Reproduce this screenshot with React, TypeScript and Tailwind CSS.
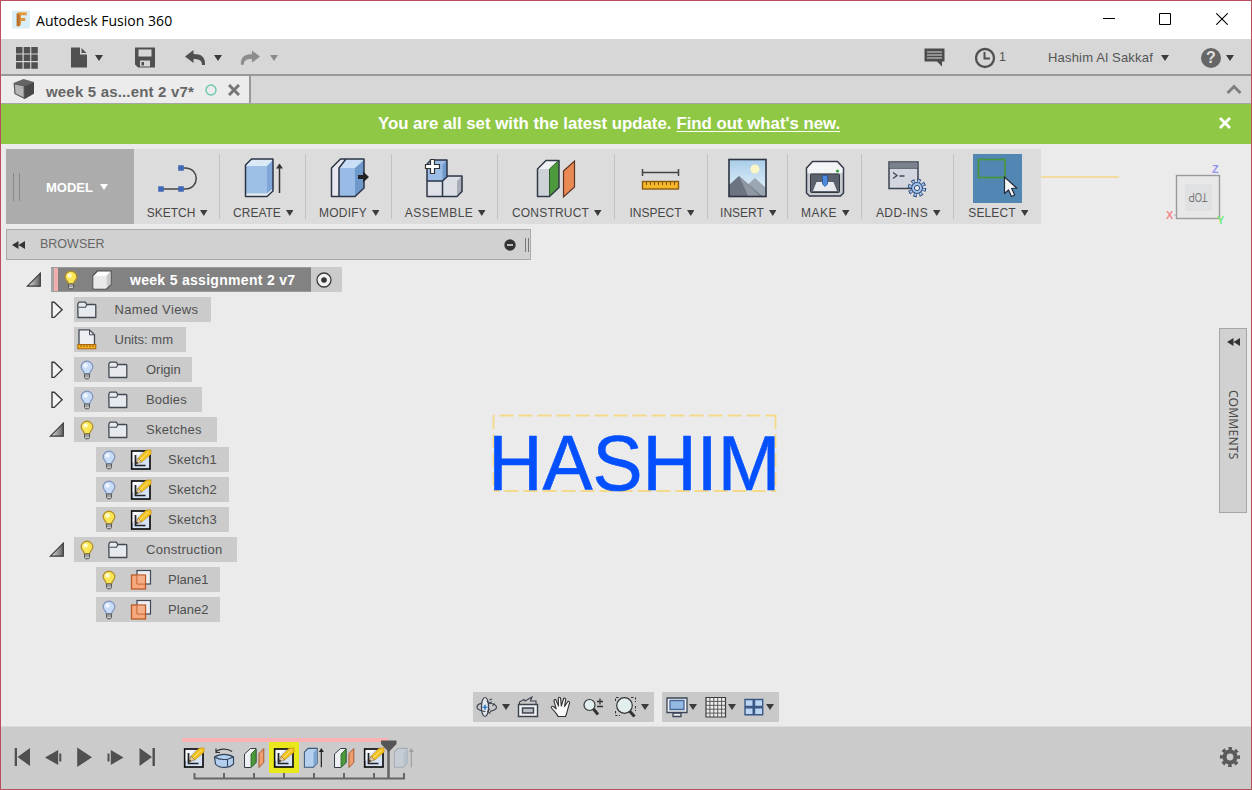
import React from "react";

type IconProps = { className?: string; size?: number };

const Caret = ({ className = "text-[#3c3c3c]", size = 8 }: IconProps) => (
  <svg width={size} height="6" viewBox="0 0 8 6" preserveAspectRatio="none" className={`shrink-0 ${className}`}>
    <path d="M0 0h8L4 6z" fill="currentColor" />
  </svg>
);

/* ---------- Ribbon icons ---------- */

const SketchIcon = () => (
  <svg width="48" height="48" viewBox="0 0 48 48" fill="none">
    <path d="M8 35H32C47 35 47 14 32 14H28" stroke="#444" strokeWidth="1.5" />
    <path d="M25.2 11.2h5.600v5.600h-5.600zM25.2 32.2h5.600v5.600h-5.600zM5.2 32.2h5.600v5.600h-5.600z" fill="#3f68b8" />
  </svg>
);

const CreateIcon = () => (
  <svg width="48" height="48" viewBox="0 0 48 48" fill="none">
    <path d="M6 11l6-6h22v32l-6 6H6z" fill="#dce9f7" />
    <path d="M6.500 12h21.500v28H6.500z" fill="#9fc0e6" />
    <path d="M28 12l6-6v31l-6 4z" fill="#7fa6d6" />
    <path d="M6.500 39.500H28l5.500-4.500v2.500L28 42.500H6.500z" fill="#eceef2" />
    <path d="M6.500 11l6-6h21.500v32l-6 5.500H6.500z" stroke="#2b3547" strokeWidth="1.500" strokeLinejoin="round" />
    <path d="M40.500 12v27" stroke="#333" strokeWidth="1.500" />
    <path d="M37 14.500l3.500-5 3.500 5z" fill="#333" />
  </svg>
);

const ModifyIcon = () => (
  <svg width="48" height="48" viewBox="0 0 48 48" fill="none">
    <path d="M6.500 14l9-9h5l-6.500 9v28H6.500z" fill="#e6e8ed" />
    <path d="M14 13l6-8h19v29l-9 8H14z" fill="#c9dff5" />
    <path d="M14 14h16v28H14z" fill="#98bce6" />
    <path d="M30 14l9-8v28l-9 8z" fill="#7099cb" />
    <path d="M6.500 14l9-9H39v29l-9 8.500H6.500zM14 42V14l7-9" stroke="#2b3547" strokeWidth="1.500" strokeLinejoin="round" />
    <path d="M33 21h5v-3.500l6 5.500-6 5.500V25h-5z" fill="#222" />
  </svg>
);

const AssembleIcon = () => (
  <svg width="48" height="48" viewBox="0 0 48 48" fill="none">
    <path d="M6 10l4-4h16v17l-4.500 4H6z" fill="#9cbde5" />
    <path d="M21.500 11L26 6v17l-4.500 4z" fill="#7199cc" />
    <path d="M6 27h15.500v15.500H6z" fill="#e0e1e6" />
    <path d="M21.500 27l5-5H41v15.500l-5 5H21.500z" fill="#dcdee5" />
    <path d="M36 27l5-5v15.500l-5 5z" fill="#a8adb8" />
    <path d="M6 10l4-4h16v17M6 10v32.500h30l5-5V22H27l-5.500 5v15.500M6 27h15.500" stroke="#2b3547" strokeWidth="1.500" strokeLinejoin="round" />
    <path d="M9.500 5.500h4v5h5v4h-5v5h-4v-5h-5v-4h5z" fill="#fff" stroke="#333" strokeWidth="1.200" />
  </svg>
);

const ConstructIcon = () => (
  <svg width="48" height="48" viewBox="0 0 48 48" fill="none">
    <path d="M5.500 15L14 6.500h13L17.500 15v27.500h-12z" fill="#f1f2f4" />
    <path d="M6 15h11.500v27H6z" fill="#cdd1d8" />
    <path d="M17.500 15L27 6.500v27l-9.500 9z" fill="#4c9a3d" />
    <path d="M5.500 15L14 6.500h13v27l-9.500 9h-12z" stroke="#333b48" strokeWidth="1.500" strokeLinejoin="round" />
    <path d="M17.500 42V15L26 7" stroke="#2b5d24" />
    <path d="M31.500 17L42.500 7v26l-11 10z" fill="#e98a55" stroke="#5a3522" strokeWidth="1.200" />
  </svg>
);

const InspectIcon = () => (
  <svg width="48" height="48" viewBox="0 0 48 48" fill="none">
    <path d="M5.500 18.500h36M5.500 15v7M41.500 15v7" stroke="#444" strokeWidth="1.500" />
    <rect x="5.500" y="27.500" width="36" height="7.500" fill="#f5b726" stroke="#8a5a10" strokeWidth="1.400" />
    <path d="M9.500 28v3M13.500 28v3M17.500 28v3M21.500 28v3M25.500 28v3M29.500 28v3M33.500 28v3M37.500 28v3" stroke="#7b5210" />
  </svg>
);

const InsertIcon = () => (
  <svg width="48" height="48" viewBox="0 0 48 48" fill="none">
    <defs>
      <linearGradient id="sky" x1="0" y1="0" x2="0" y2="1">
        <stop offset="0" stopColor="#a9cdea" />
        <stop offset="1" stopColor="#eaf5fb" />
      </linearGradient>
    </defs>
    <rect x="5" y="5.500" width="37" height="37" fill="url(#sky)" />
    <circle cx="31" cy="15" r="4.500" fill="#fbf6c5" />
    <path d="M20 34l11-10 11 10v8H22z" fill="#9aa7b2" />
    <path d="M5 31L15 22l8 7 15 13H5z" fill="#6c7482" />
    <path d="M15 22l8 7 13 13H24l-3-7z" fill="#8f97a3" />
    <rect x="5" y="5.500" width="37" height="37" stroke="#2c3440" strokeWidth="1.600" />
  </svg>
);

const MakeIcon = () => (
  <svg width="48" height="48" viewBox="0 0 48 48" fill="none">
    <path d="M5.500 14l6-6.500h25l6 6.500v25l-3 3H8.500l-3-3z" fill="#c7cad0" stroke="#333b48" strokeWidth="1.500" strokeLinejoin="round" />
    <path d="M6.500 14.500l5.500-6h24l5.500 6v4.500h-35z" fill="#f3f4f6" />
    <circle cx="36.500" cy="17" r="1.500" fill="#2f9c36" />
    <rect x="9.500" y="20" width="29" height="18.500" rx="1" fill="#5c626d" stroke="#343941" />
    <path d="M15.500 28h17l3.500 9H12z" fill="#e8eaee" />
    <path d="M21.500 21.500h5v8.500l-2.500 2.500-2.500-2.500z" fill="#4b8ade" stroke="#23559f" strokeWidth=".8" />
  </svg>
);

const AddInsIcon = () => (
  <svg width="48" height="48" viewBox="0 0 48 48" fill="none">
    <rect x="5" y="8" width="29" height="26.500" fill="#d3d6df" stroke="#3b4350" strokeWidth="1.500" />
    <rect x="5.700" y="8.700" width="27.600" height="5" fill="#7b818d" />
    <path d="M5 14.200h29" stroke="#3b4350" />
    <path d="M9 18.500l4 3-4 3M15.500 22h5" stroke="#444b57" strokeWidth="1.400" />
    <circle cx="33" cy="34" r="7" stroke="#2b4c7e" strokeWidth="4.500" strokeDasharray="3.200 2.300" />
    <circle cx="33" cy="34" r="5.500" fill="#a9c6ea" stroke="#2b4c7e" strokeWidth="1.200" />
    <circle cx="33" cy="34" r="7" stroke="#a9c6ea" strokeWidth="2.400" strokeDasharray="2 3.500" strokeDashoffset="-.6" />
    <circle cx="33" cy="34" r="2.600" fill="#e8eaee" stroke="#2b4c7e" />
  </svg>
);

const SelectIcon = () => (
  <svg width="49" height="49" viewBox="0 0 49 49" fill="none">
    <rect width="49" height="49" fill="#5387b3" />
    <rect x="5.500" y="5.500" width="26.500" height="18" stroke="#46963f" strokeWidth="1.800" />
    <path d="M31.500 23v16.500l4-3.500 3 6.500 3.200-1.500-3-6.500 5-.5z" fill="#f4f5f7" stroke="#222b3a" strokeWidth="1.200" />
  </svg>
);

/* ---------- Browser tree icons ---------- */

const Bulb = ({ on }: { on?: boolean }) => (
  <svg width="14" height="20" viewBox="0 0 14 20" fill="none" className="shrink-0">
    <path
      d="M7 1.200a5.800 5.800 0 0 0-5.800 5.800c0 2.900 3 3.900 3.200 6.900h5.200c.2-3 3.200-4 3.200-6.900A5.800 5.800 0 0 0 7 1.200z"
      fill={on ? "#fbe655" : "#c8dcf8"}
      stroke={on ? "#b08d28" : "#7f93bd"}
      strokeWidth="1.200"
    />
    <circle cx="5.500" cy="5.500" r="2.300" fill={on ? "#fffbd0" : "#eff6ff"} />
    <path d="M4.500 14h5v3.500l-1 1.300h-3l-1-1.300z" fill="#c9c9c9" stroke="#555" />
    <path d="M4.500 16h5" stroke="#666" strokeWidth=".8" />
  </svg>
);

const Folder = () => (
  <svg width="20" height="18" viewBox="0 0 20 18" fill="none" className="shrink-0">
    <path d="M.8 3L2 1.200h6.500L9.600 3.500H18a.8.8 0 0 1 .8.8V16.500H1z" fill="#e6e9ee" stroke="#434853" strokeWidth="1.300" strokeLinejoin="round" />
    <path d="M1.500 6.200H8.500l1.200-2.200" stroke="#434853" strokeWidth="1.100" />
  </svg>
);

const UnitsIcon = () => (
  <svg width="20" height="21" viewBox="0 0 20 21" fill="none" className="shrink-0">
    <path d="M2 .8h10.500l5 5v10H2z" fill="#edeff2" stroke="#444a55" strokeWidth="1.300" />
    <path d="M12.500 1v4.800h4.800" stroke="#444a55" />
    <rect x=".8" y="15.500" width="18" height="4.300" fill="#f5ae1e" stroke="#a8690c" />
    <path d="M4 16v2M7 16v2M10 16v2M13 16v2M16 16v2" stroke="#8a5a10" />
  </svg>
);

const SketchDoc = () => (
  <svg width="22" height="22" viewBox="0 0 22 22" fill="none" className="shrink-0">
    <rect x="1.700" y="2" width="18.300" height="18" fill="#d5e2f5" stroke="#111" strokeWidth="1.700" />
    <path d="M2.600 3h9l-9 11z" fill="#f7f9fd" />
    <path d="M5.500 6v10.500h10" stroke="#222" strokeWidth="1.700" />
    <path d="M16 1.200L21 .8l.2 4.200-9.400 8L8 9.200z" fill="#f3c21f" stroke="#b9860f" strokeWidth=".5" />
    <path d="M18.500 3L10 11" stroke="#fbe68a" />
    <path d="M8 9.200l-2.200 5.600 6-1.800z" fill="#eecb98" stroke="#6b5128" strokeWidth=".5" />
    <path d="M6.800 12.500l-1.200 2.500 2.600-.8z" fill="#222" />
  </svg>
);

const PlaneIcon = () => (
  <svg width="22" height="22" viewBox="0 0 22 22" fill="none" className="shrink-0">
    <rect x="7" y="1.500" width="13.500" height="13.500" fill="#eceef2" stroke="#434853" strokeWidth="1.200" />
    <rect x="1.500" y="6" width="14" height="14" fill="#f7a87c" stroke="#bb5a26" strokeWidth="1.300" />
    <path d="M7 6.500v8.500h8.500" stroke="#bb5a26" />
    <path d="M7.500 6.500h7.500V14.500H7.500z" fill="#f3b491" opacity=".6" />
  </svg>
);

const CubeIcon = () => (
  <svg width="22" height="22" viewBox="0 0 22 22" fill="none" className="shrink-0">
    <path d="M2 6.500L6.500 2H20v13.500L15.500 20H2z" fill="#fff" stroke="#4b4b4b" strokeWidth="1.100" strokeLinejoin="round" />
    <path d="M2.600 7h12.600v12.400H2.600z" fill="#e9e9e9" />
    <path d="M15.500 6.500L19.500 2.500v12.800l-4 4z" fill="#c9c9c9" />
  </svg>
);

const OpenArrow = () => (
  <svg width="16" height="16" viewBox="0 0 16 16" className="shrink-0">
    <defs>
      <linearGradient id="arr" x1="0" y1="0" x2="1" y2="0">
        <stop offset="0" stopColor="#e5e5e5" />
        <stop offset="1" stopColor="#606060" />
      </linearGradient>
    </defs>
    <path d="M14.300 1.200v13H1.300z" fill="url(#arr)" stroke="#3a3a3a" strokeWidth="1.200" />
  </svg>
);

const ClosedArrow = () => (
  <svg width="16" height="18" viewBox="0 0 16 18" className="shrink-0">
    <path d="M3 1.200h2.300l7.800 7.600-7.800 7.600H3z" fill="#f3f3f3" stroke="#3a3a3a" strokeWidth="1.400" />
  </svg>
);

/* ---------- Data ---------- */

const groups = [
  { label: "SKETCH", w: "w-[86px]", t: "", icon: <SketchIcon /> },
  { label: "CREATE", w: "w-[86px]", t: "", icon: <CreateIcon /> },
  { label: "MODIFY", w: "w-[86px]", t: "tracking-[0.2px]", icon: <ModifyIcon /> },
  { label: "ASSEMBLE", w: "w-[106px]", t: "tracking-[0.5px]", icon: <AssembleIcon /> },
  { label: "CONSTRUCT", w: "w-[117px]", t: "tracking-[0.2px]", icon: <ConstructIcon /> },
  { label: "INSPECT", w: "w-[93px]", t: "", icon: <InspectIcon /> },
  { label: "INSERT", w: "w-[80px]", t: "", icon: <InsertIcon /> },
  { label: "MAKE", w: "w-[74px]", t: "tracking-[0.5px]", icon: <MakeIcon /> },
  { label: "ADD-INS", w: "w-[92px]", t: "tracking-[0.4px]", icon: <AddInsIcon /> },
  { label: "SELECT", w: "w-[87px]", t: "tracking-[0.1px]", icon: <SelectIcon /> },
];

type Row = {
  label: string;
  indent: string;
  width: string;
  t?: string;
  arrow?: "open" | "closed";
  bulb?: "on" | "off";
  icon: React.ReactNode;
};

const rows: Row[] = [
  { label: "Named Views", indent: "pl-[42px]", width: "w-[137px]", t: "tracking-[0.35px]", arrow: "closed", icon: <Folder /> },
  { label: "Units: mm", indent: "pl-[42px]", width: "w-[112px]", icon: <UnitsIcon /> },
  { label: "Origin", indent: "pl-[42px]", width: "w-[118px]", arrow: "closed", bulb: "off", icon: <Folder /> },
  { label: "Bodies", indent: "pl-[42px]", width: "w-[128px]", t: "tracking-[0.2px]", arrow: "closed", bulb: "off", icon: <Folder /> },
  { label: "Sketches", indent: "pl-[42px]", width: "w-[143px]", t: "tracking-[0.3px]", arrow: "open", bulb: "on", icon: <Folder /> },
  { label: "Sketch1", indent: "pl-[64px]", width: "w-[133px]", t: "tracking-[0.3px]", bulb: "off", icon: <SketchDoc /> },
  { label: "Sketch2", indent: "pl-[64px]", width: "w-[133px]", t: "tracking-[0.3px]", bulb: "off", icon: <SketchDoc /> },
  { label: "Sketch3", indent: "pl-[64px]", width: "w-[133px]", t: "tracking-[0.3px]", bulb: "on", icon: <SketchDoc /> },
  { label: "Construction", indent: "pl-[42px]", width: "w-[163px]", t: "tracking-[0.3px]", arrow: "open", bulb: "on", icon: <Folder /> },
  { label: "Plane1", indent: "pl-[64px]", width: "w-[124px]", bulb: "on", icon: <PlaneIcon /> },
  { label: "Plane2", indent: "pl-[64px]", width: "w-[124px]", bulb: "off", icon: <PlaneIcon /> },
];

/* ---------- Sections ---------- */

const TitleBar = () => (
  <header className="flex h-[38px] shrink-0 items-center bg-white pl-[11px] pr-[23px]">
    <svg width="18" height="19" viewBox="0 0 19 19" className="-mt-[1px] shrink-0">
      <rect width="19" height="19" fill="#d9eef7" />
      <path d="M5 3l3-1.500h7.500v3.500H9.500v3h4.500v3H9.500v4.500L5 16.500z" fill="#e0923c" />
      <path d="M5 3l3 1.500v12L5 16.500z" fill="#b5702f" />
      <path d="M8 1.500h7.500v1.500H8z" fill="#f3b565" />
    </svg>
    <span className="ml-[6px] whitespace-nowrap font-['Open_Sans',sans-serif] text-[14px] tracking-[0.03px] text-black">Autodesk Fusion 360</span>
    <div className="-mt-[2px] ml-auto flex items-center">
      <svg width="12" height="12" viewBox="0 0 12 12"><path d="M0 5.500h12" stroke="#000" /></svg>
      <svg width="12" height="12" viewBox="0 0 12 12" className="ml-[44px] mr-[45px]"><path d="M.5.5h11v11H.5z" fill="none" stroke="#000" /></svg>
      <svg width="12" height="12" viewBox="0 0 12 12"><path d="M.3.3l11.400 11.400M11.700.3L.3 11.700" stroke="#000" strokeWidth="1.100" /></svg>
    </div>
  </header>
);

const AppBar = () => (
  <div className="flex h-[37px] shrink-0 items-center border-b-2 border-[#999] bg-[#d7d7d7] pl-[15px] pr-[17px] pt-[2px] text-[#555]">
    <svg width="22" height="22" viewBox="0 0 22 22" fill="#505050">
      <path d="M0 0h6.500v6.500H0zM7.700 0h6.500v6.500H7.700zM15.300 0h6.500v6.500h-6.500zM0 7.600h6.500v6.500H0zM7.700 7.600h6.500v6.500H7.700zM15.300 7.600h6.500v6.500h-6.500zM0 15.200h6.500v6.500H0zM7.700 15.200h6.500v6.500H7.700zM15.300 15.200h6.500v6.500h-6.500z" />
    </svg>
    <svg width="18" height="21" viewBox="0 0 18 21" className="ml-[32px]" fill="#505050">
      <path d="M1 .5h9v7h7V20.500H1zM11.500 1l5 5h-5z" />
    </svg>
    <div className="ml-[7px]"><Caret /></div>
    <svg width="20" height="21" viewBox="0 0 20 21" className="ml-[32px]" fill="#505050">
      <path fillRule="evenodd" d="M0 .5h20v20H3l-3-3zM3.500 2.500v7h13v-7z" />
      <path d="M5 13.500h10v6H5z" fill="#d7d7d7" />
      <path d="M6.500 15h2.500v3.500H6.500z" />
    </svg>
    <svg width="21" height="16" viewBox="0 0 21 16" className="ml-[30px]" fill="#505050">
      <path d="M0 6.500L8.500 0v4c8 0 12 3 11.500 11h-3c0-4-2-6-8.500-6v4z" />
    </svg>
    <div className="ml-[8px]"><Caret /></div>
    <svg width="20" height="16" viewBox="0 0 21 16" className="ml-[18px]" fill="#8d8d8d">
      <path d="M21 6.500L12.500 0v4c-8 0-12 3-11.500 11h3c0-4 2-6 8.500-6v4z" />
    </svg>
    <div className="ml-[10px]"><Caret className="text-[#8a8a8a]" /></div>

    <div className="ml-auto flex items-center">
      <svg width="21" height="19" viewBox="0 0 21 19">
        <path d="M.5.5h20v13h-2.500v5l-5-5H.5z" fill="#4c4c4c" />
        <path d="M3 4h15M3 7h15M3 10h15" stroke="#d7d7d7" strokeWidth="1.200" />
      </svg>
      <svg width="22" height="22" viewBox="0 0 22 22" className="ml-[29px]" fill="none" stroke="#505050">
        <circle cx="11" cy="11" r="9" strokeWidth="2.300" />
        <path d="M10.500 5v6.500H16" strokeWidth="2" />
      </svg>
      <span className="ml-[3px] text-[12.500px]">1</span>
      <span className="ml-[42px] whitespace-nowrap text-[13px] tracking-[0.2px]">Hashim Al Sakkaf</span>
      <div className="ml-[8px]"><Caret /></div>
      <div className="ml-[32px] flex size-[20px] items-center justify-center rounded-full bg-[#666] text-[16px] font-bold leading-none text-[#e0e0e0]">?</div>
      <div className="ml-[5px]"><Caret /></div>
    </div>
  </div>
);

const TabBar = () => (
  <div className="flex h-[28px] shrink-0 border-b border-[#a5a5a5] bg-[#d7d7d7]">
    <div className="flex w-[250px] items-center border-r-2 border-[#999] bg-[#ececec] pl-[12px]">
      <svg width="22" height="20" viewBox="0 0 22 20" className="-mt-[1px] shrink-0">
        <path d="M.5 4L10.500 0 21 3v11.500L11.500 20 1.500 15z" fill="#646464" />
        <path d="M1.500 5l9.500 2v12L2 14.500z" fill="#b5b5b5" stroke="#555" strokeWidth=".8" />
        <path d="M11.500 7.500L21 3.500v11L11.500 20z" fill="#484848" />
      </svg>
      <span className="ml-[11px] mt-[5px] whitespace-nowrap text-[15px] font-bold tracking-[0.18px] text-[#666]">week 5 as...ent 2 v7*</span>
      <svg width="12" height="12" viewBox="0 0 12 12" className="ml-auto shrink-0"><circle cx="6" cy="6" r="5" fill="none" stroke="#6bc9b0" strokeWidth="1.400" /></svg>
      <svg width="12" height="12" viewBox="0 0 12 12" className="ml-[11px] mr-[9px] shrink-0"><path d="M1 1l10 10M11 1L1 11" stroke="#777" strokeWidth="3" /></svg>
    </div>
    <svg width="16" height="10" viewBox="0 0 16 10" className="ml-auto mr-[9px] mt-[8px]"><path d="M1.500 9L8 2.500 14.500 9" fill="none" stroke="#808080" strokeWidth="3" /></svg>
  </div>
);

const Banner = () => (
  <div className="flex h-[40px] shrink-0 items-center bg-[#8fc845] pr-[20px] text-[16.800px] font-bold text-white">
    <div className="ml-[377px] flex gap-[5px] whitespace-nowrap">
      <span>You are all set with the latest update.</span>
      <span className="underline decoration-1 underline-offset-2">Find out what's new.</span>
    </div>
    <svg width="12" height="12" viewBox="0 0 12 12" className="-mt-[2px] ml-auto"><path d="M1 1l10 10M11 1L1 11" stroke="#fff" strokeWidth="2.800" /></svg>
  </div>
);

const Ribbon = () => (
  <div className="flex h-[75px] w-[1035px] bg-[#dcdcdc]">
    <div className="flex w-[128px] items-center bg-[#acacac] pl-[7px]">
      <div className="h-[28px] w-[7px] border-x border-[#888]" />
      <span className="ml-[26px] mr-[7px] mt-[2px] text-[13px] font-bold text-white">MODEL</span>
      <Caret className="text-white" />
    </div>
    {groups.map((g, i) => (
      <div key={g.label} className={`flex shrink-0 ${g.w}`}>
        <div className="flex flex-1 flex-col items-center pt-[5px]">
          <div className="h-[48px]">{g.icon}</div>
          <div className="flex h-[22px] items-center gap-[5px] pl-[1.500px]">
            <span className={`whitespace-nowrap text-[12px] leading-[14px] text-[#484848] ${g.t}`}>{g.label}</span>
            <Caret size={7.5} />
          </div>
        </div>
        {i < groups.length - 1 && <div className="my-[5px] w-[1px] bg-[#c2c2c2]" />}
      </div>
    ))}
  </div>
);

const Rewind = () => (
  <svg width="13" height="8" viewBox="0 0 13 8" fill="#333"><path d="M6.500 0v8L0 4zM13 0v8L6.500 4z" /></svg>
);

const BrowserHeader = () => (
  <div className="mt-[5px] flex h-[31px] w-[525px] items-center border border-[#aaa] bg-[#d1d1d1] pl-[5px]">
    <Rewind />
    <span className="ml-[15px] text-[12.500px] text-[#666]">BROWSER</span>
    <svg width="12" height="12" viewBox="0 0 12 12" className="ml-auto">
      <circle cx="6" cy="6" r="5.700" fill="#333" />
      <path d="M3 6h6" stroke="#ddd" strokeWidth="1.600" />
    </svg>
    <div className="ml-[9px] mr-[1px] h-[14px] w-[4px] border-x border-[#777]" />
  </div>
);

const Tree = () => (
  <div className="mt-[7px] flex flex-col gap-[5px] pl-[26px]">
    <div className="-ml-[6px] flex h-[25px] items-center">
      <OpenArrow />
      <div className="ml-[9px] flex h-full w-[260px] items-center border-y border-[#9b9b9b] bg-[#828282]">
        <div className="h-full w-[3px] bg-[#a5a5a5]" />
        <div className="h-full w-[4px] bg-[#f4adad]" />
        <div className="ml-[6px]"><Bulb on /></div>
        <div className="ml-[13px]"><CubeIcon /></div>
        <span className="ml-[17px] mt-[1px] whitespace-nowrap text-[14px] font-bold tracking-[0.3px] text-white">week 5 assignment 2 v7</span>
      </div>
      <div className="flex h-full w-[31px] items-center bg-[#cbcbcb] pl-[5px]">
        <svg width="16" height="16" viewBox="0 0 16 16"><circle cx="8" cy="8" r="7" fill="#f1f1f1" stroke="#3a3a3a" strokeWidth="1.300" /><circle cx="8" cy="8" r="2.800" fill="#333" /></svg>
      </div>
    </div>
    {rows.map((r) => (
      <div key={r.label} className="flex h-[25px]">
        <div className={`flex items-center ${r.indent}`}>
          {r.arrow && <div className="-ml-[25px] mr-[9px]">{r.arrow === "open" ? <OpenArrow /> : <ClosedArrow />}</div>}
        </div>
        <div className={`flex items-center bg-[#cbcbcb] ${r.width}`}>
          {r.bulb && <div className="ml-[5.500px] mr-[8px]"><Bulb on={r.bulb === "on"} /></div>}
          <div className={`flex w-[34px] ${r.bulb ? "ml-[6px]" : "ml-[3px]"}`}>{r.icon}</div>
          <span className={`whitespace-nowrap text-[13px] text-[#505050] ${r.bulb ? "ml-[4.500px]" : "ml-[3.500px]"} ${r.t ?? ""}`}>{r.label}</span>
        </div>
      </div>
    ))}
  </div>
);

const CanvasSketch = () => (
  <svg width="360" height="150" viewBox="-30 -20 360 150" className="absolute left-[454px] top-[243px]">
    <g fill="none" stroke="#f5d98b" strokeWidth="1.800" strokeDasharray="14 5">
      <path d="M8.500 8.500H291.500" strokeDashoffset="-6" />
      <path d="M8.500 84H291.500" strokeDashoffset="8" />
      <path d="M8.500 8v76M290.500 8v76" />
    </g>
    <text x="3.200" y="83" textLength="292" lengthAdjust="spacingAndGlyphs" fill="#0450ff" stroke="#0450ff" strokeWidth=".6" fontSize="78" fontFamily="'Liberation Sans', sans-serif">HASHIM</text>
  </svg>
);

const ViewCube = () => (
  <svg width="66" height="66" viewBox="0 0 66 66" className="absolute left-[1163px] top-[18px]" fontFamily="'Liberation Sans', sans-serif" fontWeight="bold">
    <rect x="12.500" y="13.500" width="43" height="43" fill="#e8e8e8" stroke="#9a9a9a" strokeWidth="1.400" />
    <rect x="21" y="22" width="27" height="27" fill="#e0e1e3" />
    <text x="34" y="39" transform="rotate(180 34 35)" textAnchor="middle" textLength="19" lengthAdjust="spacingAndGlyphs" fontSize="12" fontWeight="normal" fill="#777">TOP</text>
    <text x="48" y="11" fontSize="11" fill="#9494f0">Z</text>
    <text x="2" y="57" fontSize="11" fill="#f58c8c">X</text>
    <path d="M10 53h3" stroke="#aaa" />
    <text x="53" y="62" fontSize="11" fill="#74ec74">Y</text>
  </svg>
);

const CommentsTab = () => (
  <aside className="absolute right-[4px] top-[184px] flex h-[185px] w-[28px] flex-col items-center border border-[#a6a6a6] bg-[#d1d1d1] pt-[9px]">
    <Rewind />
    <span className="mr-[1px] mt-[44px] font-['Noto_Sans',sans-serif] text-[12px] leading-[14px] tracking-[0.25px] text-[#4a4a4a] [writing-mode:vertical-rl]">COMMENTS</span>
  </aside>
);

const NavBar = () => (
  <div className="absolute left-[472px] top-[548px] flex gap-[8px]">
    <div className="flex h-[30px] w-[181px] items-center bg-[#c9c9c9] pl-[3px]">
      <svg width="22" height="22" viewBox="0 0 22 22" fill="none" stroke="#3c4350" strokeWidth="1.200">
        <ellipse cx="9" cy="11" rx="3.600" ry="9.500" fill="#e3e6ea" />
        <path d="M5 7.300C2.500 8 1 9.500 1 11.200c0 2.200 4 4 8.500 4.300M13 7c4.500.6 7.500 2.200 7.500 4.300 0 2-3 3.400-6.500 4" />
        <path d="M13.500 12.800l-1.700 2.800 2.700 2M11 4.800l2.200 2.800 2.500-2M13.500 4l2.500-1M16.500 10l2-2.500" />
        <path d="M9 8.800v5M6.500 11.300h5" stroke="#2d7fc9" strokeWidth="1.600" />
      </svg>
      <div className="ml-[4px] flex"><Caret /></div>
      <svg width="22" height="22" viewBox="0 0 22 22" className="ml-[7px]" fill="none" stroke="#3c4350" strokeWidth="1.400">
        <path d="M1.500 8.500h19v12h-19z" fill="#f1f1f1" />
        <path d="M5.500 12h11v5h-11z" fill="#bcbfc6" />
        <path d="M2.500 8V6L7 3.500 8 5l7-4-1.500 4h5.500V8" strokeWidth="1.100" />
      </svg>
      <svg width="22" height="22" viewBox="0 0 22 22" className="ml-[11px]" fill="#fafafa" stroke="#333" strokeWidth="1.100" strokeLinejoin="round">
        <path d="M8 20.500c-1-3-3-4.500-6.500-8.500-.8-1.500 1-2.300 2.200-1.200l2.500 2L4 5c-.3-1.600 1.700-2 2.200-.5L8.500 10 8.300 2.500c0-1.700 2.200-1.700 2.300 0l.7 7.500L13.500 3c.5-1.400 2.500-.9 2.200.6L14.500 10.500l3-4.500c.9-1.200 2.600-.2 2 1.200C18 11 17.500 16 15.500 20.500z" />
      </svg>
      <svg width="22" height="22" viewBox="0 0 22 22" className="ml-[10px]" fill="none" stroke="#333">
        <path d="M11.500 13l4.500 5.500" strokeWidth="3" />
        <circle cx="7.500" cy="9" r="5.500" fill="#e2efee" strokeWidth="1.200" />
        <path d="M15 5.500h6M18 2.500v6M15 10.500h6" strokeWidth="1.300" />
      </svg>
      <svg width="24" height="24" viewBox="0 0 24 24" className="ml-[10px]" fill="none" stroke="#333">
        <path d="M1.500 6V2.500H6M17 2.500h4.500V7M1.500 16v4.500H6M21.500 11v5" strokeDasharray="2.500 1.500" />
        <path d="M15.500 16l5 5.500" strokeWidth="3" />
        <circle cx="10.500" cy="10.500" r="7.800" fill="#e2efee" strokeWidth="1.200" />
      </svg>
      <div className="ml-[3px]"><Caret /></div>
    </div>
    <div className="flex h-[30px] w-[117px] items-center bg-[#c9c9c9] pl-[4px]">
      <svg width="22" height="22" viewBox="0 0 22 22" fill="none" stroke="#3a4557" strokeWidth="1.300">
        <path d="M7 17h8v3.500H7z" fill="#eee" />
        <path d="M1 2h20v14.500H1z" fill="#eef0f3" />
        <path d="M4 4.500h14v9H4z" fill="#94b9e3" stroke="#47699a" />
      </svg>
      <div className="ml-[1px]"><Caret /></div>
      <svg width="22" height="22" viewBox="0 0 22 22" className="ml-[8px]" fill="none" stroke="#5a5a5a" strokeWidth="1">
        <path d="M1 1.500h19.500v19.500H1z" fill="#ededed" stroke="#3a3a3a" strokeWidth="1.200" />
        <path d="M4.900 1.500V21M8.800 1.500V21M12.700 1.500V21M16.600 1.500V21M1 5.400h19.500M1 9.300h19.500M1 13.200h19.500M1 17.100h19.500" />
      </svg>
      <div className="ml-[1px]"><Caret /></div>
      <svg width="20" height="18" viewBox="0 0 20 18" className="ml-[8px]" fill="#bcd5f1" stroke="#3b5987" strokeWidth="1.400">
        <path d="M1 1.500h8.200v7H1zM10.500 1.500h8.200v7h-8.200zM1 9.700h8.200v7H1zM10.500 9.700h8.200v7h-8.200z" />
      </svg>
      <div className="ml-[2px]"><Caret /></div>
    </div>
  </div>
);

const MiniExtrude = ({ className = "" }: IconProps) => (
  <svg width="22" height="22" viewBox="0 0 48 48" fill="none" className={className}>
    <path d="M3 11l8-8h20v32l-8 9H3z" fill="#b4d0ef" stroke="#3b5474" strokeWidth="2.200" />
    <path d="M23 12l8-8v31l-8 9z" fill="#7fa4d0" />
    <path d="M40 44V8" stroke="#222" strokeWidth="2.600" />
    <path d="M34.500 11l5.500-9 5.500 9z" fill="#222" />
  </svg>
);

const MiniPlanes = () => (
  <svg width="22" height="22" viewBox="0 0 22 22" fill="none">
    <path d="M1.500 7l6-5.500H13v14l-5.500 5h-6z" fill="#eef0f2" stroke="#333b48" />
    <path d="M8 7l5-5v13.500l-5 5z" fill="#4c9a3d" stroke="#2b5d24" strokeWidth=".8" />
    <path d="M16 6.500l4.800-5v14l-4.800 5z" fill="#f0a070" stroke="#a04e20" strokeWidth=".9" />
  </svg>
);

const Revolve = () => (
  <svg width="22" height="22" viewBox="0 0 22 22" fill="none">
    <path d="M3 5C6 1.200 15 1.200 19 4.500M3 1.500v4h4" stroke="#333" strokeWidth="1.200" />
    <path d="M1.500 10c5-3.500 14-3.500 19 0v7c-4.500 4.500-14.500 4.500-18 0z" fill="#b4d0ef" stroke="#33455e" strokeWidth="1.200" />
    <path d="M1.500 10c4 2.500 8.500 3 13 2.200v7M14.500 12.200l6-2.200" stroke="#33455e" strokeWidth="1.100" />
  </svg>
);

const steps: { icon: React.ReactNode; active?: boolean }[] = [
  { icon: <SketchDoc /> },
  { icon: <Revolve /> },
  { icon: <MiniPlanes /> },
  { icon: <SketchDoc />, active: true },
  { icon: <MiniExtrude /> },
  { icon: <MiniPlanes /> },
  { icon: <SketchDoc /> },
  { icon: <MiniExtrude className="opacity-25" /> },
];

const Timeline = () => (
  <footer className="flex h-[63px] shrink-0 items-start border-t border-[#dcdcdc] bg-[#cbcbcb]">
    <svg width="144" height="20" viewBox="0 0 144 20" className="ml-[13px] mt-[20px]" fill="#505050">
      <path d="M.7 1H3v18H.7zM16 1v18L3.500 10z" />
      <path d="M44.200 3v15L31 10.500zM45.300 6.500h2v8h-2z" />
      <path d="M63.200.5L78 10.300 63.200 20z" />
      <path d="M96.800 3v15l12.700-7.500zM93.500 6.500h2v8h-2z" />
      <path d="M125.500 1v18l12.500-9zM138.500 1h2.400v18h-2.400z" />
    </svg>
    <div className="relative ml-[24px] mt-[11px] h-[46px] w-[240px]">
      <div className="h-[4px] w-[206px] bg-[#fbb2b2]" />
      <div className="-ml-[3px] flex">
        {steps.map((s, i) => (
          <div key={i} className={`flex h-[31px] w-[30px] shrink-0 items-center justify-center ${s.active ? "bg-[#e8e81c]" : ""}`}>
            {s.icon}
          </div>
        ))}
      </div>
      <svg width="230" height="44" viewBox="0 0 230 44" className="absolute -left-[1px] top-0" fill="none">
        <path d="M13.500 35v5.500h209.500V35M43 35v5M73 35v5M103 35v5M133 35v5M163 35v5M193 35v5" stroke="#666" strokeWidth="2" />
        <path d="M207.500 6v34" stroke="#666" strokeWidth="2.600" />
        <path d="M200 2.500h15.500v3.500l-7.700 8-7.800-8z" fill="#555" />
      </svg>
    </div>
    <svg width="22" height="22" viewBox="0 0 22 22" className="ml-auto mr-[10px] mt-[19px]" fill="none" stroke="#5a5a5a">
      <circle cx="11" cy="11" r="8.600" strokeWidth="3" strokeDasharray="3.600 3.154" strokeDashoffset="1.800" />
      <circle cx="11" cy="11" r="5.500" strokeWidth="4.200" />
    </svg>
  </footer>
);

export default function App() {
  return (
    <div className="flex h-[790px] w-[1252px] flex-col overflow-hidden border border-[#b94f5c] bg-[#ebebeb] font-['Liberation_Sans',Arial,sans-serif]">
      <TitleBar />
      <AppBar />
      <TabBar />
      <Banner />
      <main className="relative min-h-0 flex-1 pl-[5px] pt-[5px]">
        <div className="absolute left-[1040px] top-[32px] h-[2px] w-[78px] bg-[#f3dca0]" />
        <CanvasSketch />
        <ViewCube />
        <Ribbon />
        <BrowserHeader />
        <Tree />
        <CommentsTab />
        <NavBar />
      </main>
      <Timeline />
    </div>
  );
}
